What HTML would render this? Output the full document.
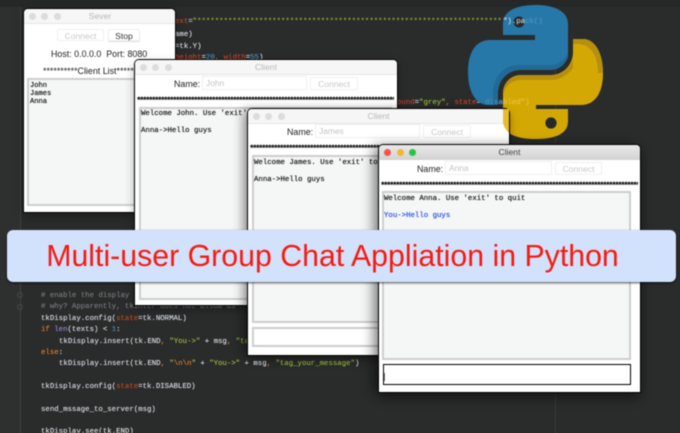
<!DOCTYPE html>
<html><head><meta charset="utf-8">
<style>
html,body{margin:0;padding:0;width:680px;height:433px;overflow:hidden;background:#2a2b2b}
#p{position:absolute;left:0;top:0;width:680px;height:433px;overflow:hidden;background:#2a2b2b;filter:blur(.5px);font-family:"Liberation Sans",sans-serif}
#p div,#p span.a{position:absolute;white-space:pre}
.c{font:7.37px/11px "Liberation Mono",monospace;color:#d0d5da;text-shadow:0 0 .4px currentColor}
.o{color:#d07a2c}.r{color:#b8442c}.g{color:#94b040}.b{color:#4a8ab8}.gr{color:#72767a}.pu{color:#8a84c0}
.w{background:#fff;border-radius:4px 4px 0 0;box-shadow:0 0 0 1px #000,0 4px 10px rgba(0,0,0,.35);overflow:hidden}
.t{left:0;top:0;right:0;height:14px;background:#f6f6f6;border-bottom:1px solid #e6e6e6}
.d{width:7px;height:7px;border-radius:50%;top:4px;background:#dcdcdc}
.tt{left:0;right:0;top:0;text-align:center;font-size:8.6px;line-height:14px;color:#b8b8b8}
.n{font-size:8.9px;line-height:12px;color:#222}
.i{background:#fff;border:1px solid #efefef;font-size:8.4px;line-height:13px;color:#c4c4c4;padding-left:3px;box-sizing:border-box}
.btn{background:#fff;border:1px solid #efefef;border-radius:2px;font-size:8.6px;line-height:12px;color:#c9c9c9;text-align:center;box-sizing:border-box}
.s{font:bold 9px/9px "Liberation Sans",sans-serif;letter-spacing:-.5px;color:#000;overflow:hidden}
.ta{background:#f5f6f6;border:2px solid #cdcdcd;box-sizing:border-box}
.m{font:7.37px/8.6px "Liberation Mono",monospace;color:#222;text-shadow:0 0 .5px #222}
</style></head><body><div id="p">

<div style="left:0;top:0;width:20px;height:433px;background:#2e2f2f"></div>
<div style="left:20px;top:0;width:1px;height:433px;background:#3f4040"></div>
<div style="left:555px;top:0;width:1px;height:433px;background:#383939"></div>
<div style="left:3px;top:0;width:8px;height:4px;background:#77736a"></div>
<div style="left:0;top:0;width:680px;height:7px;background:#262727"></div>
<div style="left:17px;top:292px;width:6px;height:6px;border:1px solid #484949;border-radius:50%;box-sizing:border-box"></div>
<div style="left:17px;top:304px;width:6px;height:6px;border:1px solid #484949;border-radius:50%;box-sizing:border-box"></div>

<div class="c" style="left:175px;top:17px;color:#8aa83c;width:328px;overflow:hidden"><span class="r">ext</span><span style="color:#c0c6cc">=</span>"**************************************************************************</div>
<div class="c" style="left:175px;top:30px">ame)</div>
<div class="c" style="left:175px;top:42px">=tk.Y)</div>
<div class="c" style="left:175px;top:53px"><span class="r">height</span>=<span class="b">20</span><span class="o">,</span> <span class="r">width</span>=<span class="b">55</span>)</div>
<div class="c" style="left:397px;top:98px"><span class="r">ound</span>=<span class="g">"grey"</span><span class="o">,</span> <span class="r">state</span>=<span class="b">"disabled"</span>)</div>

<div class="c" style="left:41px;top:291px"><span class="gr"># enable the display and insert</span></div>
<div class="c" style="left:41px;top:302px"><span class="gr"># why? Apparently, tkinter does not allow us</span></div>
<div class="c" style="left:41px;top:314px">tkDisplay.config(<span class="r">state</span>=tk.NORMAL)</div>
<div class="c" style="left:41px;top:325px"><span class="o">if</span> <span class="pu">len</span>(texts) &lt; <span class="b">1</span>:</div>
<div class="c" style="left:59px;top:337px">tkDisplay.insert(tk.END<span class="o">,</span> <span class="g">"You-&gt;"</span> + msg<span class="o">,</span> <span class="g">"tag_your_message"</span>)</div>
<div class="c" style="left:41px;top:348px"><span class="o">else</span>:</div>
<div class="c" style="left:59px;top:359px">tkDisplay.insert(tk.END<span class="o">,</span> <span class="g">"<span class="o">\n\n</span>"</span> + <span class="g">"You-&gt;"</span> + msg<span class="o">,</span> <span class="g">"tag_your_message"</span>)</div>
<div class="c" style="left:41px;top:382px">tkDisplay.config(<span class="r">state</span>=tk.DISABLED)</div>
<div class="c" style="left:41px;top:405px">send_mssage_to_server(msg)</div>
<div class="c" style="left:41px;top:427px">tkDisplay.see(tk.END)</div>

<!-- server -->
<div class="w" style="left:24px;top:9px;width:151px;height:203px">
 <div class="t"></div><div class="d" style="left:5px"></div><div class="d" style="left:17px"></div><div class="d" style="left:30px"></div>
 <div class="tt" style="left:0;right:-1px">Sever</div>
 <div class="btn" style="left:33px;top:20px;width:47px;height:12px">Connect</div>
 <div class="btn" style="left:84px;top:20px;width:32px;height:12px;color:#333;box-shadow:0 1px 1px #e0e0e0">Stop</div>
 <div class="n" style="left:27px;top:39px">Host: 0.0.0.0  Port: 8080</div>
 <div class="n" style="left:19px;top:56px">**********Client List**********</div>
 <div class="ta" style="left:3px;top:69px;width:146px;height:128px"></div>
 <div class="m" style="left:6px;top:73px;line-height:8.2px;font-size:7.1px">John
James
Anna</div>
</div>

<!-- client 1 -->
<div class="w" style="left:135px;top:60px;width:262px;height:245px">
 <div class="t"></div><div class="d" style="left:5px"></div><div class="d" style="left:17px"></div><div class="d" style="left:30px"></div>
 <div class="tt">Client</div>
 <div class="n" style="left:39px;top:18px">Name:</div>
 <div class="i" style="left:67px;top:16px;width:105px;height:14px">John</div>
 <div class="btn" style="left:175px;top:17px;width:48px;height:13px">Connect</div>
 <div class="s" style="left:2px;top:36px;width:257px;height:7px">**************************************************************************************************************</div>
 <div class="ta" style="left:4px;top:47px;width:253px;height:193px"></div>
 <div class="m" style="left:6px;top:50px">Welcome John. Use 'exit' to quit

Anna-&gt;Hello guys</div>
</div>

<!-- python logo -->
<svg style="position:absolute;left:0;top:0" width="680" height="433" viewBox="0 0 680 433">
 <path d="M536 5C520 5 503 9 503 24L503 35L535 35L535 40L490 40C476 40 468 52 468 72C468 92 476 105 488 105L498 105L498 93C498 80 508 70 520 70L550 70C560 70 568 62 568 52L568 24C568 10 552 5 536 5Z" fill="#2678a8"/>
 <path d="M493 105L498 105L498 93C498 80 508 70 520 70L550 70C559 70 565 65 568 57L568 53C564 61 558 65 550 65L518 65C504 65 493 77 493 93Z" fill="#216a96"/>
 <circle cx="519" cy="22" r="5.5" fill="#24292c"/>
 <path d="M535 139C551 139 568 136 568 121L568 109L536 109L536 105L581 105C595 105 603 93 603 73C603 53 595 39 583 39L573 39L573 52C573 65 563 75 551 75L521 75C511 75 503 83 503 93L503 121C503 135 519 139 535 139Z" fill="#d4a804"/>
 <path d="M573 39L583 39C595 39 603 53 603 73L598 73C598 55 590 44 578 44L573 44Z" fill="#b4900e"/>
 <path d="M503 93C503 83 511 75 521 75L551 75C560 75 567 71 573 60L573 68C568 75 560 80 551 80L522 80C512 80 506 85 504 93Z" fill="#b4900e"/>
 <circle cx="551" cy="123" r="5.6" fill="#24292c"/>
</svg>
<div class="c" style="left:503px;top:17px;color:#e4e6e8;opacity:.85">").pa</div>
<div class="c" style="left:525.1px;top:17px;color:#4c94c0">ck()</div>
<div class="c" style="left:485px;top:98px;color:#4a94c4">disa</div>
<div class="c" style="left:503px;top:98px;color:#e8c43c">bled")</div>

<!-- client 2 -->
<div class="w" style="left:248px;top:109px;width:261px;height:246px;box-shadow:0 0 0 1px #000,-6px 0 10px rgba(0,0,0,.28),0 4px 10px rgba(0,0,0,.35)">
 <div class="t"></div><div class="d" style="left:5px"></div><div class="d" style="left:17px"></div><div class="d" style="left:30px"></div>
 <div class="tt">Client</div>
 <div class="n" style="left:39px;top:17px">Name:</div>
 <div class="i" style="left:67px;top:15px;width:105px;height:14px">James</div>
 <div class="btn" style="left:175px;top:16px;width:48px;height:13px">Connect</div>
 <div class="s" style="left:2px;top:35px;width:257px;height:7px">**************************************************************************************************************</div>
 <div class="ta" style="left:4px;top:46px;width:253px;height:168px"></div>
 <div class="m" style="left:6px;top:50px">Welcome James. Use 'exit' to quit

Anna-&gt;Hello guys</div>
 <div class="ta" style="left:4px;top:218px;width:253px;height:20px;background:#fff"></div>
</div>
<svg style="position:absolute;left:0;top:0" width="680" height="433" viewBox="0 0 680 433">
 <path d="M503 109L509 109L509 133C506 130 503 126 503 121Z" fill="#e8bd2a"/>
</svg>

<!-- client 3 -->
<div class="w" style="left:379px;top:145px;width:261px;height:247px;box-shadow:0 0 0 1px #000,-7px 0 12px rgba(0,0,0,.3),0 5px 12px rgba(0,0,0,.45)">
 <div class="t" style="height:15px;background:linear-gradient(#e9e9e9,#d2d2d2);border:0"></div>
 <div class="d" style="left:5px;top:4px;background:#f9504c"></div><div class="d" style="left:18px;top:4px;background:#f7b52e"></div><div class="d" style="left:30px;top:4px;background:#27c63f"></div>
 <div class="tt" style="color:#444;line-height:15px">Client</div>
 <div class="n" style="left:38px;top:18px">Name:</div>
 <div class="i" style="left:66px;top:16px;width:107px;height:14px">Anna</div>
 <div class="btn" style="left:176px;top:17px;width:47px;height:13px">Connect</div>
 <div class="s" style="left:2px;top:36px;width:257px;height:7px">**************************************************************************************************************</div>
 <div class="ta" style="left:3px;top:46px;width:249px;height:169px"></div>
 <div class="m" style="left:5px;top:50px">Welcome Anna. Use 'exit' to quit

<span style="color:#2c55e8;text-shadow:0 0 .5px #2c55e8">You-&gt;Hello guys</span></div>
 <div style="left:4px;top:219px;width:248px;height:21px;background:#fff;border:1px solid #000;box-sizing:border-box"></div>
 <div style="left:5px;top:228px;width:1px;height:8px;background:#777"></div>
</div>

<!-- banner -->
<div style="left:7px;top:230px;width:669px;height:52px;background:#d2e1fc;border-radius:6px;box-shadow:0 1px 2px rgba(0,0,0,.7)"></div>
<div style="left:7px;top:230px;width:669px;height:52px;line-height:54px;text-align:center;font-size:30.3px;color:#f81a10;text-indent:-18px">Multi-user Group Chat Appliation in Python</div>

</div></body></html>
